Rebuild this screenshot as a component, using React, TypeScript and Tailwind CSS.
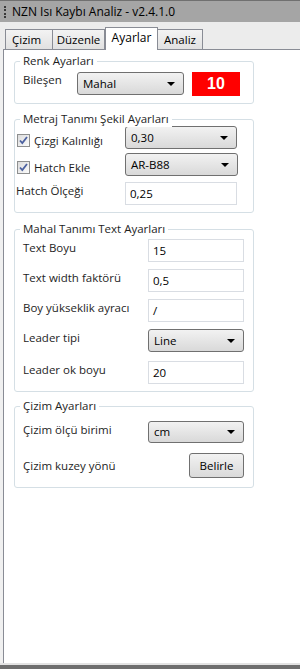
import React from 'react';

const font = { fontFamily: '"Open Sans", "Noto Sans", sans-serif' };

function Caret() {
  return (
    <svg width="8" height="4" viewBox="0 0 8 4" className="shrink-0">
      <path d="M0 0h8L4 4z" fill="#000" />
    </svg>
  );
}

function Combo({ value, w, h = 23 }: { value: string; w: number; h?: number }) {
  return (
    <div
      className="flex items-center justify-between rounded-[3px] border border-[#707070] bg-gradient-to-b from-[#f2f2f2] to-[#d9d9d9] pl-[5px] pr-[8px] text-[11.5px] text-black"
      style={{ width: w, height: h }}
    >
      <span>{value}</span>
      <Caret />
    </div>
  );
}

function Field({ value, w, h = 23 }: { value: string; w: number; h?: number }) {
  return (
    <div
      className="flex items-center border border-[#d9dde3] bg-white pl-[4px] text-[11.5px] text-black"
      style={{ width: w, height: h }}
    >
      {value}
    </div>
  );
}

function Check() {
  return (
    <div className="flex h-[13px] w-[13px] shrink-0 items-center justify-center border border-[#8e8f8f] bg-gradient-to-br from-[#dcdcdc] to-[#fbfbfb]">
      <svg width="9" height="9" viewBox="0 0 9 9">
        <path d="M1 4.5l2.3 2.6L8 1" fill="none" stroke="#4c61a0" strokeWidth="1.8" />
      </svg>
    </div>
  );
}

function Group({ title, h, mt, children }: { title: string; h: number; mt: number; children: React.ReactNode }) {
  return (
    <div
      className="relative ml-[10px] w-[240px] rounded-[3px] border border-[#d5dfe5]"
      style={{ height: h, marginTop: mt }}
    >
      <span className="absolute -top-[9px] left-[5px] bg-white px-[3px] text-[11.5px] leading-[16px] text-[#1e1e1e]">
        {title}
      </span>
      {children}
    </div>
  );
}

function Row({ label, mt, children, center }: { label: string; mt: number; children: React.ReactNode; center?: boolean }) {
  return (
    <div className={`flex pl-[8px] ${center ? 'items-center' : 'items-start'}`} style={{ marginTop: mt }}>
      <span className={`w-[125px] whitespace-nowrap text-[11.5px] leading-[16px] text-[#1e1e1e] ${center ? '' : 'mt-[1px]'}`}>{label}</span>
      {children}
    </div>
  );
}

export default function App() {
  return (
    <div className="flex h-[669px] w-[300px] flex-col bg-[#f0f0f0]" style={font}>
      {/* title bar */}
      <div className="flex h-[22px] shrink-0 items-center border-t border-[#707070] bg-[#a5a5a5] pl-[4px]">
        <div className="mr-[6px] h-[12px] w-[2px] border-l-2 border-dotted border-[#3a3a3a]" />
        <span className="text-[12px] text-black">NZN Isı Kaybı Analiz - v2.4.1.0</span>
      </div>

      {/* tabs */}
      <div className="flex h-[27px] shrink-0 items-end bg-[#ececec] pl-[5px]">
        <div className="flex h-[20px] w-[48px] items-center border border-b-0 border-[#898c95] bg-gradient-to-b from-[#f3f3f3] to-[#e1e1e1] pl-[6px] text-[11.5px] text-black">
          Çizim
        </div>
        <div className="flex h-[20px] w-[52px] items-center justify-center border border-b-0 border-l-0 border-[#898c95] bg-gradient-to-b from-[#f3f3f3] to-[#e1e1e1] text-[11.5px] text-black">
          Düzenle
        </div>
        <div className="relative -mb-px flex h-[23px] w-[53px] items-start justify-center border border-b-0 border-[#898c95] bg-white pt-[1px] text-[12px] text-black">
          Ayarlar
        </div>
        <div className="flex h-[20px] w-[45px] items-center justify-center border border-b-0 border-l-0 border-[#898c95] bg-gradient-to-b from-[#f3f3f3] to-[#e1e1e1] text-[11.5px] text-black">
          Analiz
        </div>
      </div>

      {/* content */}
      <div className="ml-[3px] flex-1 border-l border-t border-[#898c95] bg-white">
        <Group title="Renk Ayarları" h={43} mt={11}>
          <div className="flex items-start pl-[8px] pt-[10px]">
            <span className="w-[54px] text-[11.5px] leading-[16px] text-[#1e1e1e]">Bileşen</span>
            <Combo value="Mahal" w={107} />
            <div className="ml-[8px] flex h-[24px] w-[48px] items-center justify-center bg-[#ff0000] text-[16px] font-bold text-white" style={{ fontFamily: '"Liberation Sans", Arial, sans-serif' }}>
              10
            </div>
          </div>
        </Group>

        <Group title="Metraj Tanımı Şekil Ayarları" h={94} mt={15}>
          <div className="mt-[6px] flex items-start pl-[2px]">
            <div className="mt-[8px] flex w-[108px] items-center">
              <Check />
              <span className="ml-[4px] text-[11.5px] leading-[13px] text-[#1e1e1e]">Çizgi Kalınlığı</span>
            </div>
            <Combo value="0,30" w={112} />
          </div>
          <div className="mt-[4px] flex items-start pl-[2px]">
            <div className="mt-[8px] flex w-[108px] items-center">
              <Check />
              <span className="ml-[4px] text-[11.5px] leading-[13px] text-[#1e1e1e]">Hatch Ekle</span>
            </div>
            <Combo value="AR-B88" w={113} />
          </div>
          <div className="mt-[6px] flex items-start pl-[1px]">
            <span className="mt-[1px] w-[109px] text-[11.5px] leading-[16px] text-[#1e1e1e]">Hatch Ölçeği</span>
            <Field value="0,25" w={112} />
          </div>
        </Group>

        <Group title="Mahal Tanımı Text Ayarları" h={163} mt={16}>
          <Row label="Text Boyu" mt={9}>
            <Field value="15" w={96} />
          </Row>
          <Row label="Text width faktörü" mt={7}>
            <Field value="0,5" w={96} />
          </Row>
          <Row label="Boy yükseklik ayracı" mt={7}>
            <Field value="/" w={96} />
          </Row>
          <Row label="Leader tipi" mt={7}>
            <Combo value="Line" w={96} />
          </Row>
          <Row label="Leader ok boyu" mt={9}>
            <Field value="20" w={96} />
          </Row>
        </Group>

        <Group title="Çizim Ayarları" h={82} mt={14}>
          <Row label="Çizim ölçü birimi" mt={14}>
            <Combo value="cm" w={96} h={22} />
          </Row>
          <Row label="Çizim kuzey yönü" mt={10} center>
            <div className="ml-[41px] flex h-[25px] w-[55px] items-center justify-center rounded-[3px] border border-[#707070] bg-gradient-to-b from-[#f2f2f2] to-[#dadada] text-[11.5px] text-black">
              Belirle
            </div>
          </Row>
        </Group>
      </div>

      <div className="h-[2px] shrink-0 bg-[#e3e3e3]" />
      <div className="h-[4px] shrink-0 bg-[#6e6e6e]" />
    </div>
  );
}
